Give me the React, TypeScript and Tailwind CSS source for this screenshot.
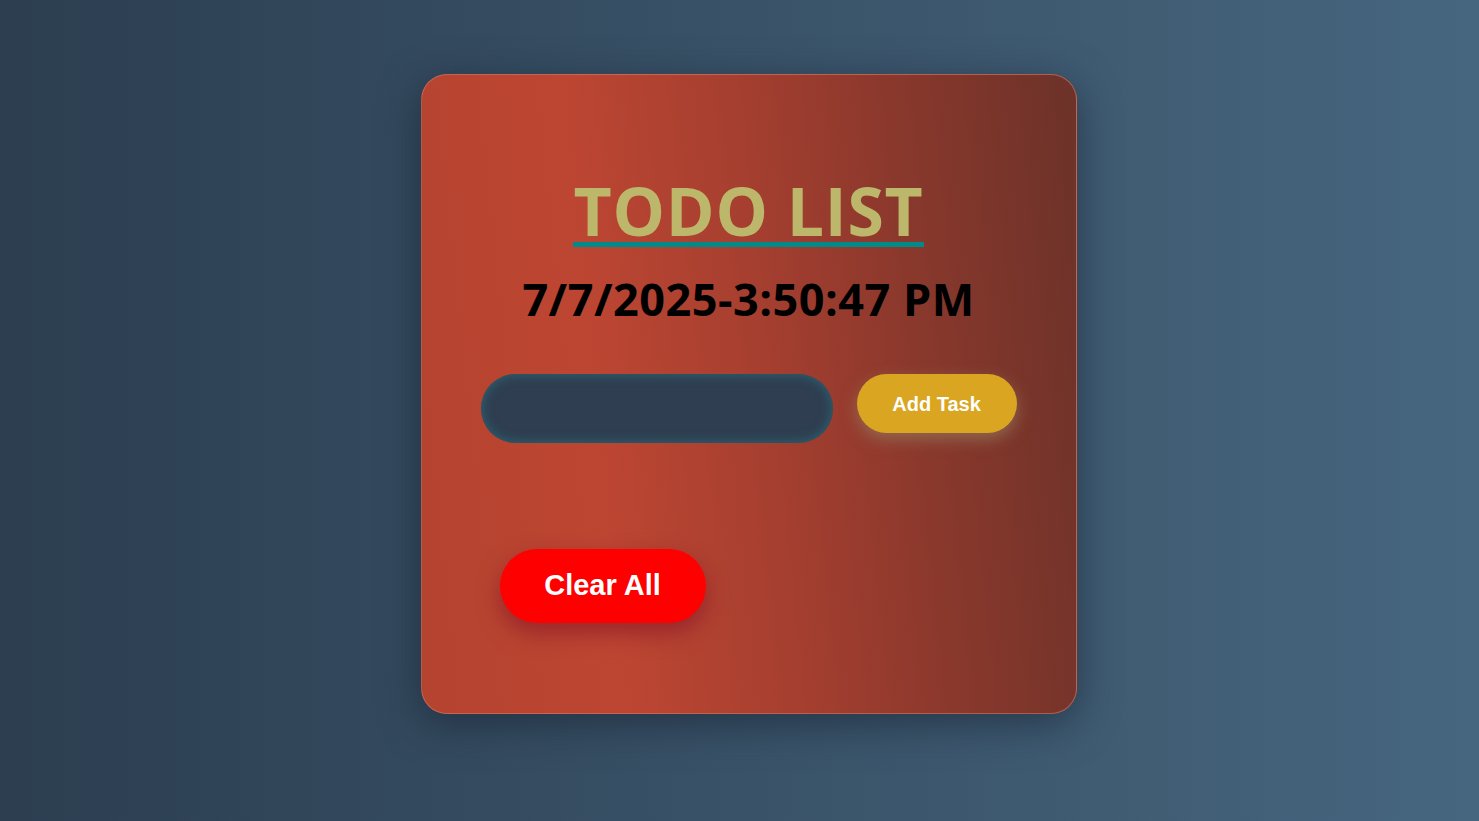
import { useState } from 'react';

export default function App() {
  const [task, setTask] = useState('');

  return (
    <div className="min-h-screen w-full bg-[linear-gradient(to_right,#2c3e50,#46667f)] flex justify-center pt-[74px] pl-[18px]">
      <div className="w-[656px] h-[640px] rounded-[26px] border border-[#d77a63]/60 bg-[linear-gradient(84deg,#b4432f_0%,#bd4632_28%,#a63f30_52%,#8a382c_74%,#6c3229_100%)] shadow-[0_10px_40px_rgba(20,30,45,0.55)] flex flex-col">
        <h1 className="mt-[106px] text-center font-['Open_Sans',sans-serif] font-bold text-[66px] leading-[58px] tracking-[0.8px] text-[#bdb76b]">
          <span className="inline-block pb-[3px] border-b-[5px] border-[#008b8b]">TODO LIST</span>
        </h1>
        <h2 className="mt-[24px] text-center font-['Open_Sans',sans-serif] font-bold text-[45px] leading-[56px] tracking-[0.5px] text-black">
          7/7/2025-3:50:47 PM
        </h2>
        <div className="mt-[47px] flex justify-center gap-6">
          <input
            value={task}
            onChange={(e) => setTask(e.target.value)}
            className="w-[352px] h-[69px] rounded-full bg-[#2f3e50] outline-none px-6 text-white shadow-[inset_0_0_12px_#2a6a78]"
          />
          <button className="w-[160px] h-[59px] rounded-full bg-[#daa520] text-white font-bold text-[20px] font-['Liberation_Sans',Arial,sans-serif] shadow-[0_6px_16px_rgba(150,120,90,0.75)]">
            Add Task
          </button>
        </div>
        <div className="mt-[106px] pl-[78px]">
          <button className="w-[206px] h-[74px] rounded-full bg-[#ff0000] text-white font-bold text-[29px] font-['Liberation_Sans',Arial,sans-serif] shadow-[0_10px_22px_rgba(140,20,40,0.65)]">
            Clear All
          </button>
        </div>
      </div>
    </div>
  );
}
